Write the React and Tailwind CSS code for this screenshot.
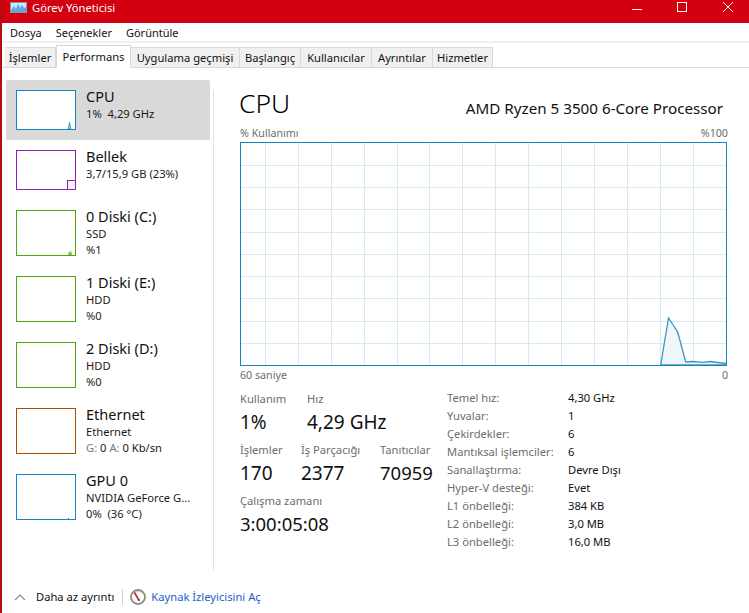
import React from "react";

const tabs = [
  { label: "İşlemler", w: "w-[51px]" },
  { label: "Performans", w: "w-[75px]", active: true },
  { label: "Uygulama geçmişi", w: "w-[109px]" },
  { label: "Başlangıç", w: "w-[61px]" },
  { label: "Kullanıcılar", w: "w-[71px]" },
  { label: "Ayrıntılar", w: "w-[61px]" },
  { label: "Hizmetler", w: "w-[60px]" },
];

const specs = [
  ["Temel hız:", "4,30 GHz"],
  ["Yuvalar:", "1"],
  ["Çekirdekler:", "6"],
  ["Mantıksal işlemciler:", "6"],
  ["Sanallaştırma:", "Devre Dışı"],
  ["Hyper-V desteği:", "Evet"],
  ["L1 önbelleği:", "384 KB"],
  ["L2 önbelleği:", "3,0 MB"],
  ["L3 önbelleği:", "16,0 MB"],
];

const Thumb = ({ border, h, children }) => (
  <div className={`relative w-[60px] shrink-0 border bg-white overflow-hidden ${border} ${h}`}>
    {children}
  </div>
);

const SideItem = ({ title, border, h, rowH, active, lines, children }) => (
  <div className={`flex gap-[10px] pl-[10px] pt-[10px] rounded-[2px] ${rowH} ${active ? "bg-[#d9d9d9]" : ""}`}>
    <Thumb border={border} h={h}>{children}</Thumb>
    <div className="min-w-0 text-[#1a1a1a]">
      <div className="text-[14.5px] leading-[15px] text-[#111] mt-[-1px]">{title}</div>
      {lines.map((l, i) => (
        <div key={i} className={`text-[11.2px] leading-[15px] whitespace-pre ${i === 0 ? "mt-[2px]" : "mt-[1px]"}`}>{l}</div>
      ))}
    </div>
  </div>
);

const Stat = ({ label, value, w, size = "text-[19px]", gap = "mt-[2px]" }) => (
  <div className={w}>
    <div className="text-[11.2px] leading-[16px] text-[#6d6d6d] whitespace-nowrap">{label}</div>
    <div className={`text-[#111] leading-[26px] whitespace-nowrap ${size} ${gap}`}>{value}</div>
  </div>
);

const CpuChart = () => {
  const vs = [24.5, 57.5, 90.5, 123.5, 156.5, 188.5, 221.5, 254.5, 287.5, 320.5, 353.5, 386.5, 419.5, 452.5];
  const hs = [22.5, 44.5, 66.5, 89.5, 111.5, 133.5, 155.5, 178.5, 200.5];
  return (
    <svg width="485" height="222" viewBox="0 0 485 222" className="block">
      {vs.map((x) => (
        <line key={x} x1={x} x2={x} y1="0" y2="222" stroke="#d9eaf4" strokeWidth="1" />
      ))}
      {hs.map((y) => (
        <line key={y} x1="0" x2="485" y1={y} y2={y} stroke="#d9eaf4" strokeWidth="1" />
      ))}
      <path
        d="M419.700 222 L427.500 175 L436.700 189 L444.700 219 L452 218.500 L461.700 219.300 L469 218.500 L485 220.500 L485 222 Z"
        fill="#f1f6fb"
        stroke="#3d95c6"
        strokeWidth="1.300"
      />
    </svg>
  );
};

export default function App() {
  return (
    <div
      className="relative w-[749px] h-[613px] overflow-hidden bg-white border-l-2 border-[#b40c17] text-[#1a1a1a]"
      style={{ fontFamily: '"Noto Sans", "Open Sans", sans-serif' }}
    >
      {/* title bar */}
      <div className="h-[23px] -ml-[2px] bg-[#d3000f] flex items-start text-white">
        <svg width="17" height="11" viewBox="0 0 17 11" className="ml-[10px] mt-[2px] shrink-0">
          <rect x="0.500" y="0.500" width="16" height="10" fill="#cfe6f7" stroke="#8a9bab" />
          <path d="M1 8 L4 4 L6 7 L8 2 L10 6 L12 3 L14 6 L16 5 L16 10 L1 10 Z" fill="#5ea9e0" />
        </svg>
        <span className="ml-[5px] text-[11.2px] leading-[16px] whitespace-nowrap">Görev Yöneticisi</span>
        <div className="ml-auto flex items-center">
          <div className="w-[10px] h-px bg-white mt-[7px] mr-[35px]" />
          <div className="w-[10px] h-[10px] border border-white mt-[2px] mr-[36px]" />
          <svg width="10" height="10" viewBox="0 0 10 10" className="mt-[2px] mr-[16px]">
            <path d="M0 0 L10 10 M10 0 L0 10" stroke="white" strokeWidth="1" />
          </svg>
        </div>
      </div>

      {/* menu */}
      <div className="h-[18px] flex gap-[14px] pl-[8px] text-[11px] leading-[20px] text-[#111] border-b-2 border-[#f0f0f0] box-content">
        <span>Dosya</span>
        <span>Seçenekler</span>
        <span>Görüntüle</span>
      </div>

      {/* tabs */}
      <div className="h-[24px] flex items-end pl-[3px] border-b border-[#d9d9d9] box-content">
        {tabs.map((t) => (
          <div
            key={t.label}
            className={`${t.w} flex justify-center whitespace-nowrap text-[11.2px] text-[#111] border-t border-r border-[#d9d9d9] ${
              t.active
                ? "h-[23px] leading-[21px] bg-white border-l -mb-px relative"
                : "h-[20px] leading-[20px] bg-[#f0f0f0]"
            }`}
          >
            {t.label}
          </div>
        ))}
      </div>

      <div className="flex">
        {/* sidebar */}
        <div className="w-[211px] shrink-0 pl-[4px] pr-[3px] pt-[12px]">
          <SideItem title="CPU" active border="border-[#1585c3]" h="h-[40px]" rowH="h-[60px]" lines={["1%  4,29 GHz"]}>
            <svg width="58" height="38" viewBox="0 0 58 38" className="absolute inset-0">
              <path d="M51 38 L52.500 31 L54 38 Z" fill="#7fb8dd" stroke="#2b8cc4" strokeWidth="0.600" />
            </svg>
          </SideItem>
          <SideItem title="Bellek" border="border-[#8f1eb4]" h="h-[40px]" rowH="h-[60px]" lines={["3,7/15,9 GB (23%)"]}>
            <div className="absolute right-0 bottom-0 w-[8px] h-[9px] bg-[#f4f2f4] border-l border-t border-[#8f1eb4]" />
          </SideItem>
          <SideItem title="0 Diski (C:)" border="border-[#4da60c]" h="h-[46px]" rowH="h-[66px]" lines={["SSD", "%1"]}>
            <svg width="58" height="44" viewBox="0 0 58 44" className="absolute inset-0">
              <path d="M51 44 L52 40 L53 42 L54 39 L55 44 Z" fill="#7cc04a" />
            </svg>
          </SideItem>
          <SideItem title="1 Diski (E:)" border="border-[#4da60c]" h="h-[46px]" rowH="h-[66px]" lines={["HDD", "%0"]} />
          <SideItem title="2 Diski (D:)" border="border-[#4da60c]" h="h-[46px]" rowH="h-[66px]" lines={["HDD", "%0"]} />
          <SideItem
            title="Ethernet"
            border="border-[#a74f01]"
            h="h-[46px]"
            rowH="h-[66px]"
            lines={[
              "Ethernet",
              <span key="n"><span className="text-[#777]">G:</span> 0 <span className="text-[#777]">A:</span> 0 Kb/sn</span>,
            ]}
          />
          <SideItem title="GPU 0" border="border-[#1585c3]" h="h-[46px]" rowH="h-[66px]" lines={["NVIDIA GeForce G...", "0%  (36 °C)"]}>
            <div className="absolute right-[6px] bottom-0 w-px h-px bg-[#1585c3]" />
          </SideItem>
        </div>

        {/* divider */}
        <div className="w-px h-[480px] mt-[22px] bg-[#e3e3e3] shrink-0" />

        {/* details */}
        <div className="flex-1 pl-[26px] pr-[21px] pt-[18px]">
          <div className="flex items-end justify-between h-[34px]">
            <h1 className="text-[26.500px] leading-[34px] font-light text-black -ml-[1px]">CPU</h1>
            <span className="text-[15.200px] leading-[20px] mb-[2px] mr-[5px] whitespace-nowrap text-[#111]">AMD Ryzen 5 3500 6-Core Processor</span>
          </div>
          <div className="flex justify-between text-[10.700px] leading-[14px] text-[#6d6d6d] mt-[6px]">
            <span>% Kullanımı</span>
            <span>%100</span>
          </div>
          <div className="w-[487px] h-[224px] border border-[#1585c3] mt-[2px]">
            <CpuChart />
          </div>
          <div className="flex justify-between text-[10.700px] leading-[14px] text-[#6d6d6d] mt-[2px]">
            <span>60 saniye</span>
            <span>0</span>
          </div>

          <div className="flex mt-[9px]">
            <div className="w-[207px]">
              <div className="flex">
                <Stat label="Kullanım" value="1%" w="w-[67px]" />
                <Stat label="Hız" value="4,29 GHz" />
              </div>
              <div className="flex mt-[7px]">
                <Stat label="İşlemler" value="170" w="w-[61px]" />
                <Stat label="İş Parçacığı" value="2377" w="w-[79px]" />
                <Stat label="Tanıtıcılar" value="70959" size="text-[18.500px]" />
              </div>
              <div className="mt-[7px]">
                <Stat label="Çalışma zamanı" value="3:00:05:08" size="text-[18.500px]" />
              </div>
            </div>
            <div className="grid grid-cols-[121px_1fr] auto-rows-[18px] text-[11.200px] leading-[18px] -mt-[2px] h-fit">
              {specs.map(([k, v]) => (
                <React.Fragment key={k}>
                  <span className="text-[#6d6d6d] whitespace-nowrap">{k}</span>
                  <span className="text-[#111] whitespace-nowrap">{v}</span>
                </React.Fragment>
              ))}
            </div>
          </div>
        </div>
      </div>

      {/* footer */}
      <div className="absolute left-0 bottom-0 h-[32px] w-full flex items-center text-[11.200px]">
        <svg width="12" height="8" viewBox="0 0 12 8" className="ml-[12px] shrink-0">
          <path d="M1 7 L6 2 L11 7" fill="none" stroke="#8a8a8a" strokeWidth="1.200" />
        </svg>
        <span className="ml-[10px] text-[#111] whitespace-nowrap">Daha az ayrıntı</span>
        <div className="w-px h-[16px] bg-[#cfcfcf] ml-[8px]" />
        <svg width="16" height="16" viewBox="0 0 16 16" className="ml-[7px] shrink-0">
          <circle cx="8" cy="8" r="7" fill="#fff" stroke="#8c8c86" strokeWidth="1.800" />
          <path d="M3 5 A6 6 0 0 1 13 5" fill="none" stroke="#d9c9a8" strokeWidth="1" />
          <path d="M4.500 3.500 L9 11.500" stroke="#c8202c" strokeWidth="1.600" />
          <circle cx="9" cy="11" r="1" fill="#555" />
        </svg>
        <span className="ml-[5px] text-[#1a62c8] whitespace-nowrap">Kaynak İzleyicisini Aç</span>
      </div>
    </div>
  );
}
